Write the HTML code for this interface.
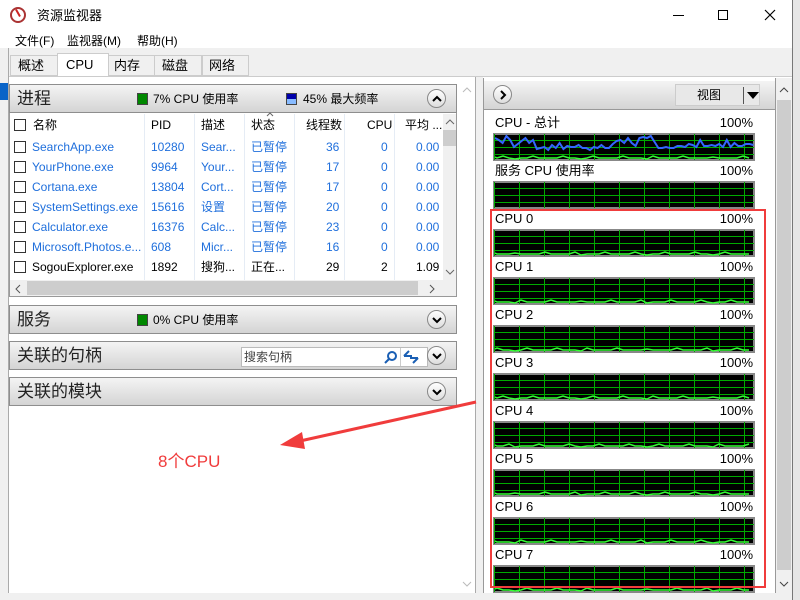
<!DOCTYPE html>
<html><head><meta charset="utf-8"><style>
*{margin:0;padding:0;box-sizing:border-box}
body{width:800px;height:600px;overflow:hidden;background:#f0f0f0;font-family:"Liberation Sans","Noto Sans CJK SC",sans-serif;font-size:12px;line-height:1.1;color:#000;position:relative}
.abs{position:absolute}
.hdr{position:absolute;left:9px;width:448px;height:29px;background:linear-gradient(#f4f4f4,#d4d4d4);border:1px solid #8e8e8e;}
.hdr .t{position:absolute;left:7px;top:5px;font-size:17px;color:#222;line-height:1}
.circ{position:absolute;right:10px;top:4px;width:19px;height:19px;border-radius:50%;border:1px solid #888;background:linear-gradient(#fff,#ddd)}
.circ svg{position:absolute;left:4px;top:4px}
.row{position:absolute;left:10px;width:432px;height:20px;font-size:12px}
.row span{position:absolute;top:4px;white-space:nowrap;line-height:1}
.cb{position:absolute;left:4px;top:4px;width:12px;height:12px;border:1px solid #333;background:#fff}
.blue{color:#1f6fdc}
.lab{position:absolute;left:495px;width:258px;font-size:13px;line-height:1}
.lab b{font-weight:normal;position:absolute;right:0}
</style></head><body>
<div class="abs" style="left:0;top:0;width:792px;height:48px;background:#fff"></div>
<div class="abs" style="left:792px;top:0;width:8px;height:600px;background:#e6e6e6;border-left:1px solid #777"></div>
<div class="abs" style="left:10px;top:7px;width:16px;height:16px;border-radius:50%;border:2px solid #a33;background:#fff"></div>
<div class="abs" style="left:17px;top:9px;width:2px;height:8px;background:#c22;transform:rotate(-30deg)"></div>
<div class="abs" style="left:37px;top:9px;font-size:13px;line-height:1">资源监视器</div>
<div class="abs" style="left:673px;top:15px;width:11px;height:1px;background:#000"></div>
<div class="abs" style="left:718px;top:10px;width:10px;height:10px;border:1px solid #000"></div>
<svg class="abs" style="left:764px;top:9px" width="12" height="12"><path d="M1 1L11 11M11 1L1 11" stroke="#000" stroke-width="1.2"/></svg>
<div class="abs" style="left:15px;top:35px;font-size:12px;line-height:1">文件(F)</div>
<div class="abs" style="left:67px;top:35px;font-size:12px;line-height:1">监视器(M)</div>
<div class="abs" style="left:137px;top:35px;font-size:12px;line-height:1">帮助(H)</div>
<div class="abs" style="left:8px;top:48px;width:1px;height:545px;background:#aaa"></div>
<div class="abs" style="left:10px;top:55px;width:48px;height:21px;border:1px solid #ccc;background:#f0f0f0;padding:3px 7px;font-size:13px;line-height:1">概述</div>
<div class="abs" style="left:57px;top:53px;width:52px;height:24px;border:1px solid #ccc;border-bottom:none;background:#fff;padding:4px 8px;font-size:13px;line-height:1">CPU</div>
<div class="abs" style="left:108px;top:55px;width:47px;height:21px;border:1px solid #ccc;background:#f0f0f0;padding:3px 5px;font-size:13px;line-height:1">内存</div>
<div class="abs" style="left:154px;top:55px;width:48px;height:21px;border:1px solid #ccc;background:#f0f0f0;padding:3px 7px;font-size:13px;line-height:1">磁盘</div>
<div class="abs" style="left:202px;top:55px;width:47px;height:21px;border:1px solid #ccc;background:#f0f0f0;padding:3px 6px;font-size:13px;line-height:1">网络</div>
<div class="abs" style="left:9px;top:76px;width:783px;height:517px;background:#fff;border-top:1px solid #ccc"></div>
<div class="abs" style="left:9px;top:406px;width:449px;height:187px;background:#fff"></div>
<div class="hdr" style="top:84px"><span class="t">进程</span>
<div class="abs" style="left:127px;top:8px;width:11px;height:12px;background:#080;border:1px solid #444"></div><span class="abs" style="left:143px;top:8px;line-height:1">7% CPU 使用率</span>
<div class="abs" style="left:276px;top:8px;width:11px;height:12px;background:linear-gradient(#00a 50%,#8bf 50%);border:1px solid #444"></div><span class="abs" style="left:293px;top:8px;line-height:1">45% 最大频率</span>
<div class="circ"><svg width="10" height="10"><path d="M1 7L5 3L9 7" stroke="#000" stroke-width="2" fill="none"/></svg></div></div>
<div class="abs" style="left:9px;top:113px;width:448px;height:184px;border:1px solid #999;border-top:none;background:#fff"></div>
<div class="abs" style="left:443px;top:114px;width:13px;height:166px;background:#f0f0f0"></div>
<div class="abs" style="left:443px;top:130px;width:13px;height:16px;background:#cdcdcd"></div>
<svg class="abs" style="left:445px;top:118px" width="10" height="8"><path d="M1 6L5 2L9 6" stroke="#666" fill="none"/></svg>
<svg class="abs" style="left:445px;top:268px" width="10" height="8"><path d="M1 2L5 6L9 2" stroke="#666" fill="none"/></svg>
<div class="abs" style="left:10px;top:280px;width:446px;height:16px;background:#f0f0f0"></div>
<div class="abs" style="left:27px;top:281px;width:391px;height:14px;background:#cdcdcd"></div>
<svg class="abs" style="left:14px;top:284px" width="8" height="10"><path d="M6 1L2 5L6 9" stroke="#555" fill="none"/></svg>
<svg class="abs" style="left:428px;top:284px" width="8" height="10"><path d="M2 1L6 5L2 9" stroke="#555" fill="none"/></svg>
<div class="row" style="top:115px"><div class="cb"></div><span style="left:23px">名称</span><span style="left:141px">PID</span><span style="left:191px">描述</span><span style="left:241px">状态</span><span style="left:296px">线程数</span><span style="left:357px">CPU</span><span style="left:395px">平均 ...</span></div>
<svg class="abs" style="left:266px;top:112px" width="8" height="5"><path d="M1 4L4 1L7 4" stroke="#666" fill="none"/></svg>
<div class="abs" style="left:144px;top:114px;width:1px;height:166px;background:#e5ecf5;box-shadow:50px 0 #e5ecf5,100px 0 #e5ecf5,150px 0 #e5ecf5,200px 0 #e5ecf5,250px 0 #e5ecf5"></div>
<div class="row blue" style="top:137px"><div class="cb"></div><span style="left:22px">SearchApp.exe</span><span style="left:141px">10280</span><span style="left:191px">Sear...</span><span style="left:241px">已暂停</span><span style="left:316px">36</span><span style="left:371px">0</span><span style="left:406px">0.00</span></div>
<div class="row blue" style="top:157px"><div class="cb"></div><span style="left:22px">YourPhone.exe</span><span style="left:141px">9964</span><span style="left:191px">Your...</span><span style="left:241px">已暂停</span><span style="left:316px">17</span><span style="left:371px">0</span><span style="left:406px">0.00</span></div>
<div class="row blue" style="top:177px"><div class="cb"></div><span style="left:22px">Cortana.exe</span><span style="left:141px">13804</span><span style="left:191px">Cort...</span><span style="left:241px">已暂停</span><span style="left:316px">17</span><span style="left:371px">0</span><span style="left:406px">0.00</span></div>
<div class="row blue" style="top:197px"><div class="cb"></div><span style="left:22px">SystemSettings.exe</span><span style="left:141px">15616</span><span style="left:191px">设置</span><span style="left:241px">已暂停</span><span style="left:316px">20</span><span style="left:371px">0</span><span style="left:406px">0.00</span></div>
<div class="row blue" style="top:217px"><div class="cb"></div><span style="left:22px">Calculator.exe</span><span style="left:141px">16376</span><span style="left:191px">Calc...</span><span style="left:241px">已暂停</span><span style="left:316px">23</span><span style="left:371px">0</span><span style="left:406px">0.00</span></div>
<div class="row blue" style="top:237px"><div class="cb"></div><span style="left:22px">Microsoft.Photos.e...</span><span style="left:141px">608</span><span style="left:191px">Micr...</span><span style="left:241px">已暂停</span><span style="left:316px">16</span><span style="left:371px">0</span><span style="left:406px">0.00</span></div>
<div class="row" style="top:257px"><div class="cb"></div><span style="left:22px">SogouExplorer.exe</span><span style="left:141px">1892</span><span style="left:191px">搜狗...</span><span style="left:241px">正在...</span><span style="left:316px">29</span><span style="left:371px">2</span><span style="left:406px">1.09</span></div>
<div class="hdr" style="top:305px"><span class="t">服务</span>
<div class="abs" style="left:127px;top:8px;width:11px;height:12px;background:#080;border:1px solid #444"></div><span class="abs" style="left:143px;top:8px;line-height:1">0% CPU 使用率</span><div class="circ"><svg width="10" height="10"><path d="M1 3L5 7L9 3" stroke="#000" stroke-width="2" fill="none"/></svg></div></div>
<div class="hdr" style="top:341px"><span class="t">关联的句柄</span>
<div class="abs" style="left:231px;top:5px;width:187px;height:20px;background:#fff;border:1px solid #bbb"><span class="abs" style="left:2px;top:3px;color:#444;line-height:1">搜索句柄</span>
<svg class="abs" style="left:142px;top:2px" width="14" height="14"><circle cx="8" cy="6" r="4" stroke="#1a5fb4" stroke-width="2" fill="none"/><path d="M5 9L1 13" stroke="#1a5fb4" stroke-width="2"/></svg>
<div class="abs" style="left:158px;top:0;width:1px;height:18px;background:#ccc"></div>
<svg class="abs" style="left:161px;top:2px" width="16" height="14"><path d="M1 6L6 1M1 6H9M15 8L10 13M15 8H7" stroke="#1a5fb4" stroke-width="2" fill="none"/></svg></div><div class="circ"><svg width="10" height="10"><path d="M1 3L5 7L9 3" stroke="#000" stroke-width="2" fill="none"/></svg></div></div>
<div class="hdr" style="top:377px"><span class="t">关联的模块</span><div class="circ"><svg width="10" height="10"><path d="M1 3L5 7L9 3" stroke="#000" stroke-width="2" fill="none"/></svg></div></div>
<div class="abs" style="left:458px;top:77px;width:18px;height:516px;background:#fff;border-right:1px solid #aaa"></div>
<div class="abs" style="left:476px;top:77px;width:7px;height:516px;background:#f0f0f0"></div>
<svg class="abs" style="left:462px;top:86px" width="10" height="8"><path d="M1 6L5 2L9 6" stroke="#bbb" fill="none"/></svg>
<svg class="abs" style="left:462px;top:580px" width="10" height="8"><path d="M1 2L5 6L9 2" stroke="#bbb" fill="none"/></svg>
<div class="abs" style="left:483px;top:78px;width:293px;height:515px;border-left:1px solid #999;border-right:1px solid #999;background:#fff"></div>
<div class="abs" style="left:484px;top:81px;width:291px;height:29px;background:linear-gradient(#f4f4f4,#d4d4d4);border-bottom:1px solid #999"></div>
<div class="abs" style="left:493px;top:85px;width:19px;height:19px;border-radius:50%;border:1px solid #888;background:linear-gradient(#fff,#ddd)"><svg class="abs" style="left:5px;top:4px" width="8" height="10"><path d="M2 1L6 5L2 9" stroke="#000" stroke-width="2" fill="none"/></svg></div>
<div class="abs" style="left:675px;top:84px;width:85px;height:22px;background:#e8e8e8;border:1px solid #ccc"><span class="abs" style="left:21px;top:4px;font-size:12px;line-height:1">视图</span><div class="abs" style="left:67px;top:2px;width:1px;height:17px;background:#555"></div><div class="abs" style="left:71px;top:7px;border:6px solid transparent;border-top:7px solid #000"></div></div>
<div class="abs" style="left:776px;top:78px;width:16px;height:515px;background:#f0f0f0"></div>
<div class="abs" style="left:777px;top:100px;width:14px;height:470px;background:#cdcdcd"></div>
<svg class="abs" style="left:779px;top:86px" width="10" height="8"><path d="M1 6L5 2L9 6" stroke="#444" fill="none"/></svg>
<svg class="abs" style="left:779px;top:580px" width="10" height="8"><path d="M1 2L5 6L9 2" stroke="#444" fill="none"/></svg>
<div id="graphs"></div>
<script>
var names=["CPU - 总计","服务 CPU 使用率","CPU 0","CPU 1","CPU 2","CPU 3","CPU 4","CPU 5","CPU 6","CPU 7"];
var h="";
for(var i=0;i<10;i++){var y=116+i*48;
h+='<div class="lab" style="top:'+y+'px">'+names[i]+'<b>100%</b></div>';
var gy=133+i*48;
h+='<svg class="abs" style="left:493px;top:'+gy+'px" width="262" height="28"><rect x="1" y="1" width="260" height="26" fill="#000" stroke="#888" stroke-width="2"/>';
for(var x=0;x<262;x+=25)h+='<line x1="'+(x+1.5)+'" y1="1" x2="'+(x+1.5)+'" y2="27" stroke="#0a0"/>';
for(var yy=7;yy<27;yy+=7)h+='<line x1="1" y1="'+(yy+0.5)+'" x2="261" y2="'+(yy+0.5)+'" stroke="#0a0"/>';
if(i!=1){var p="M2 24";for(var x=4;x<262;x+=6){p+=" L"+x+" "+(25+((x*7+i*13)%5==0?-2:0)+(x%11==0?1:0));}h+='<path d="'+p+'" stroke="#3f3" fill="none" stroke-width="1.5"/>';}
if(i==0){var pts=[3,5,8,1,5,12,9,6,3,8,5,14,13,12,15,10,13,8,14,11,12,12,10,13,13,15,12,13,10,13,13,9,6,5,8,3,8,11,3,2,3,1,7,13,13,12,13,13,11,11,12,9,10,12,5,11,11,10,11,9,12,5,12,8,11,11,9,9,10];var p="";for(var k=0;k<pts.length;k++){p+=(k?" L":"M")+(k*3.8+2)+" "+(pts[k]+2);}h+='<path d="'+p+'" stroke="#36f" fill="none" stroke-width="2"/>';}
h+='</svg>';}
document.getElementById("graphs").innerHTML=h;
</script>
<div class="abs" style="left:490px;top:209px;width:276px;height:379px;border:2px solid #f03c3c"></div>
<svg class="abs" style="left:0;top:0" width="800" height="600"><line x1="476" y1="402" x2="300" y2="441" stroke="#f03c3c" stroke-width="3"/><polygon points="280,445 302,432 305,449" fill="#f03c3c"/></svg>
<div class="abs" style="left:158px;top:453px;font-size:17px;color:#f03c3c;line-height:1">8个CPU</div>
<div class="abs" style="left:0;top:83px;width:8px;height:17px;background:#0a64c8"></div>
</body></html>
